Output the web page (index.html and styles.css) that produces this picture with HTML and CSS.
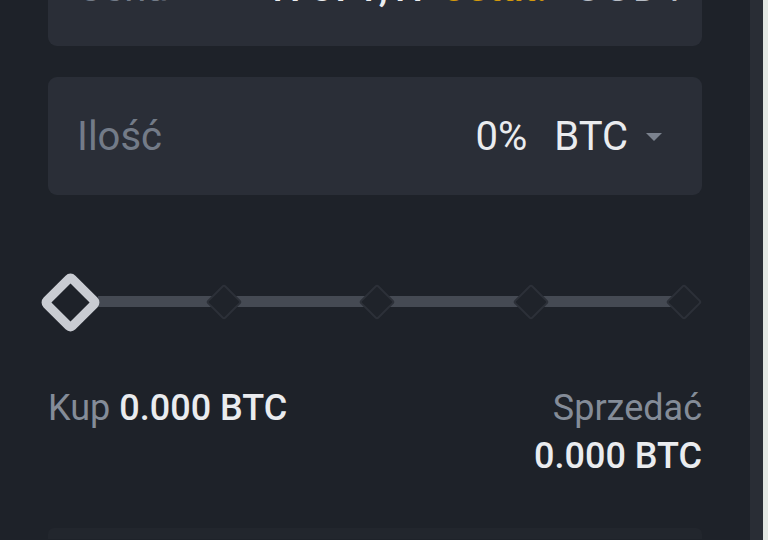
FILE: index.html
```html
<!DOCTYPE html>
<html lang="pl">
<head>
    <meta charset="UTF-8">
    <meta name="viewport" content="width=device-width, initial-scale=1.0">
    <title>Zlecenie</title>
    <link rel="stylesheet" href="styles.css">
</head>
<body>
    <div class="screen">
        <main class="order-form">
            <!-- Price field, mostly scrolled out of view -->
            <div class="field field-price">
                <span class="field-label">Cena</span>
                <span class="price-value">17871,17</span>
                <span class="price-tag">Ostat.</span>
                <span class="field-unit">USDT</span>
            </div>

            <!-- Amount field -->
            <div class="field">
                <span class="field-label">Ilość</span>
                <span class="amount">
                    <span class="amount-value">0%</span>
                    <span class="amount-unit">BTC</span>
                    <span class="caret"></span>
                </span>
            </div>

            <!-- Percentage slider -->
            <div class="slider">
                <div class="slider-track"></div>
                <div class="slider-marks">
                    <span class="mark mark-active"><i></i></span>
                    <span class="mark"><i></i></span>
                    <span class="mark"><i></i></span>
                    <span class="mark"><i></i></span>
                    <span class="mark"><i></i></span>
                </div>
            </div>

            <!-- Available amounts -->
            <div class="summary">
                <div class="summary-buy">
                    <span class="summary-label">Kup</span>
                    <span class="summary-value">0.000 BTC</span>
                </div>
                <div class="summary-sell">
                    <span class="summary-label">Sprzedać</span>
                    <span class="summary-value">0.000 BTC</span>
                </div>
            </div>

            <div class="next-block"></div>
        </main>
        <div class="edge">
            <div class="edge-line"></div>
        </div>
    </div>
</body>
</html>
```

FILE: styles.css
```css
* {
    margin: 0;
    padding: 0;
    box-sizing: border-box;
}

body {
    font-family: Roboto, 'Liberation Sans', sans-serif;
    background: #1e2229;
    height: 540px;
    overflow: hidden;
    color: #eaecef;
}

.screen {
    display: flex;
    height: 540px;
    overflow: hidden;
}

.order-form {
    flex: 1;
    min-width: 0;
    padding: 0 48px 0 48px;
    margin-top: -72px;
}

/* Input fields */
.field {
    height: 118px;
    background: #2a2e37;
    border-radius: 9px;
    display: flex;
    align-items: center;
    padding: 0 40px 0 29px;
    font-size: 40px;
    margin-bottom: 31px;
    overflow: hidden;
    white-space: nowrap;
}

.field-label {
    color: #737b88;
    flex: 1;
}

.field-price .field-label {
    flex: 0 0 188px;
}

.price-value {
    color: #eaecef;
    flex: 0 0 175px;
    font-weight: 500;
}

.price-tag {
    color: #d49a0c;
    flex: 0 0 135px;
    font-weight: 500;
}

.field-unit {
    flex-shrink: 0;
    color: #b7bdc6;
    letter-spacing: 4px;
}

.amount {
    display: flex;
    align-items: center;
}

.amount-value {
    margin-right: 27px;
}

.caret {
    width: 0;
    height: 0;
    border-left: 8px solid transparent;
    border-right: 8px solid transparent;
    border-top: 8px solid #7b828e;
    margin-left: 18px;
    margin-top: 2px;
}

/* Slider */
.slider {
    position: relative;
    height: 58px;
    margin-top: 78px;
}

.slider-track {
    position: absolute;
    left: 50px;
    right: 18px;
    top: 23px;
    height: 11px;
    background: #454a53;
}

.slider-marks {
    position: relative;
    display: flex;
    justify-content: space-between;
    align-items: center;
    height: 58px;
    padding-left: 4px;
}

.mark {
    width: 36px;
    height: 36px;
    display: flex;
    align-items: center;
    justify-content: center;
}

.mark i {
    display: block;
    width: 26px;
    height: 26px;
    background: #1f232a;
    border: 2px solid #2c3038;
    border-radius: 3px;
    transform: rotate(45deg);
    flex-shrink: 0;
}

.mark-active i {
    width: 45px;
    height: 45px;
    border: 9px solid #c9ccd2;
    border-radius: 7px;
    background: #1e2229;
}

/* Buy / sell amounts */
.summary {
    display: flex;
    justify-content: space-between;
    align-items: flex-start;
    margin-top: 53px;
    font-size: 36px;
    line-height: 48px;
}

.summary-buy {
    display: flex;
    gap: 9px;
}

.summary-sell {
    display: flex;
    flex-direction: column;
    align-items: flex-end;
}

.summary-label {
    color: #848c98;
}

.summary-value {
    font-weight: 500;
    color: #eaecef;
}

.next-block {
    height: 11px;
    margin-top: 48px;
    background: #22262d;
    border-radius: 6px 6px 0 0;
}

/* Right edge strip */
.edge {
    width: 18px;
    flex-shrink: 0;
    background: #292d35;
    display: flex;
    justify-content: flex-end;
}

.edge-line {
    width: 5px;
    background: #e3e8e4;
}
```
